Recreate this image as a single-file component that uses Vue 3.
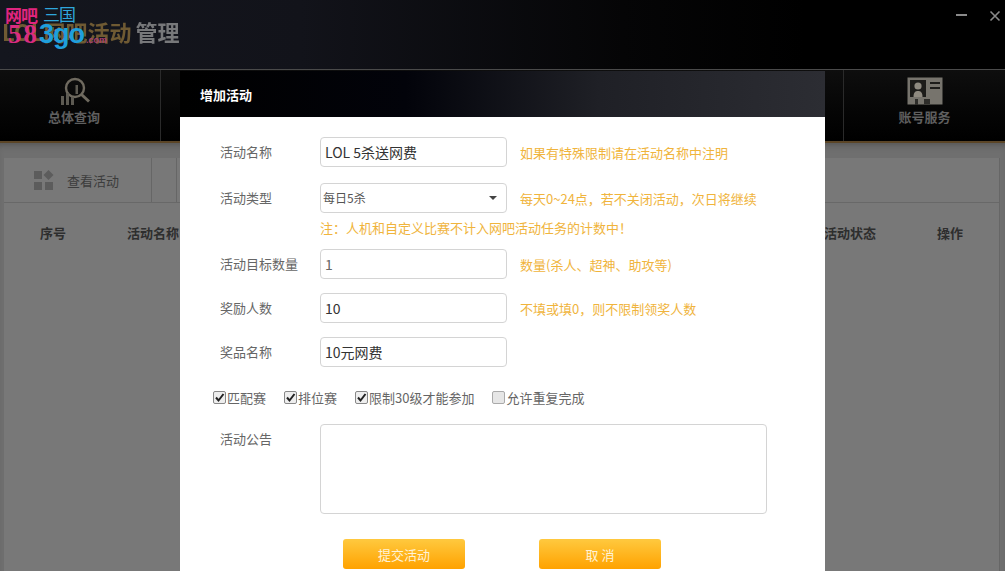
<script setup>
const tips = {
  name: '如果有特殊限制请在活动名称中注明',
  type: '每天0~24点，若不关闭活动，次日将继续',
  note: '注：人机和自定义比赛不计入网吧活动任务的计数中！',
  count: '数量(杀人、超神、助攻等)',
  people: '不填或填0，则不限制领奖人数'
}
const checks = [
  { label: '匹配赛', checked: true },
  { label: '排位赛', checked: true },
  { label: '限制30级才能参加', checked: true },
  { label: '允许重复完成', checked: false }
]
const columns = ['序号', '活动名称', '活动状态', '操作']
</script>

<template>
  <div class="window">
    <header class="topbar">
      <div class="logo"><span class="logo-gold">LOL网吧活动</span><span class="logo-gray">管理</span></div>
      <div class="winctl">
        <span class="minimize"></span>
        <svg class="close" width="12" height="12" viewBox="0 0 12 12"><path d="M1.5 1.5l9 9M10.5 1.5l-9 9" stroke="#8a8a8a" stroke-width="1.6" /></svg>
      </div>
    </header>

    <nav class="nav">
      <div class="nav-item first">
        <svg width="32" height="30" viewBox="0 0 32 30" fill="none">
          <circle cx="17" cy="12" r="9" stroke="#6f6a5f" stroke-width="2.4" />
          <path d="M23.5 18.5l7.5 7" stroke="#6f6a5f" stroke-width="3" />
          <path d="M3 20h3v9H3zM8 17h3v12H8zM13 21h3v8h-3zM17.5 9h2.5v9h-2.5z" fill="#5d5a52" />
        </svg>
        <span>总体查询</span>
      </div>
      <div class="nav-spacer"></div>
      <div class="nav-item last">
        <svg width="36" height="29" viewBox="0 0 36 29">
          <rect x="0.5" y="0.5" width="35" height="27" fill="#77746d" />
          <rect x="3" y="3" width="16" height="17" fill="#1d1c1a" />
          <circle cx="11" cy="9" r="3.6" fill="#8f8a80" />
          <path d="M6.5 20c0-5 2-6 4.500-6s4.500 1 4.500 6z" fill="#8f8a80" />
          <path d="M23 5h10v2H23zM23 10h10v2H23z" fill="#1d1c1a" />
          <path d="M8 22h3v6H8zM17 22h6v5h-6z" fill="#2e2d2a" />
        </svg>
        <span>账号服务</span>
      </div>
    </nav>

    <main class="content">
      <div class="panel">
        <div class="tabs">
          <div class="tab active">
            <svg width="20" height="20" viewBox="0 0 20 20" fill="#5c5c5c">
              <rect x="0" y="1" width="8" height="8" />
              <path d="M14.500 0l5 5-5 5-5-5z" />
              <rect x="0" y="12" width="8" height="8" />
              <rect x="11" y="12" width="8" height="8" />
            </svg>
            <span>查看活动</span>
          </div>
          <div class="tab blank"></div>
        </div>
        <div class="thead">
          <span v-for="c in columns" :key="c">{{ c }}</span>
        </div>
      </div>
    </main>

    <div class="watermark">
      <span class="wm-wang">网吧</span>
      <span class="wm-san">三国</span>
      <span class="wm-num"><b class="pink">58</b><b class="blue">3go</b><i>.com</i></span>
    </div>

    <section class="modal">
      <h2 class="modal-title">增加活动</h2>
      <form class="modal-body" @submit.prevent>
        <div class="row r-name">
          <label>活动名称</label>
          <div class="field strong">LOL 5杀送网费</div>
          <span class="tip">{{ tips.name }}</span>
        </div>
        <div class="row r-type">
          <label>活动类型</label>
          <div class="field select"><span>每日5杀</span><i class="caret"></i></div>
          <span class="tip">{{ tips.type }}</span>
        </div>
        <div class="note">{{ tips.note }}</div>
        <div class="row r-count">
          <label>活动目标数量</label>
          <div class="field">1</div>
          <span class="tip">{{ tips.count }}</span>
        </div>
        <div class="row r-next">
          <label>奖励人数</label>
          <div class="field strong">10</div>
          <span class="tip">{{ tips.people }}</span>
        </div>
        <div class="row r-next">
          <label>奖品名称</label>
          <div class="field strong">10元网费</div>
        </div>
        <div class="checks">
          <span v-for="c in checks" :key="c.label" class="check">
            <span class="box" :class="{ on: c.checked }">
              <svg v-if="c.checked" width="11" height="11" viewBox="0 0 11 11"><path d="M2 5.500l2.500 3L9.500 2" fill="none" stroke="#222" stroke-width="2" /></svg>
            </span>{{ c.label }}
          </span>
        </div>
        <div class="row r-notice">
          <label>活动公告</label>
          <div class="area"></div>
        </div>
        <div class="actions">
          <button class="btn" type="button">提交活动</button>
          <button class="btn" type="button">取 消</button>
        </div>
      </form>
    </section>
  </div>
</template>

<style>
html, body { margin: 0; background: #777; overflow: hidden; }
</style>

<style scoped>
.window {
  position: relative;
  width: 1005px;
  height: 571px;
  overflow: hidden;
  display: flex;
  flex-direction: column;
  font-family: "Noto Sans CJK SC", "Liberation Sans", sans-serif;
  background: #757575;
}
.topbar {
  height: 69px;
  flex: none;
  display: flex;
  justify-content: space-between;
  background: linear-gradient(90deg, #14161e 0%, #12131a 30%, #050506 62%, #000 80%);
  border-bottom: 1px solid #4a4a4a;
}
.logo {
  padding: 17px 0 0 2px;
  font-size: 22px;
  line-height: 28px;
  font-weight: 700;
  white-space: nowrap;
  filter: blur(0.5px);
}
.logo-gold { color: #6f5a33; }
.logo-gray { color: #77787a; margin-left: 4px; }
.winctl { display: flex; gap: 22px; padding: 10px 4px 0 0; align-items: flex-start; }
.minimize { width: 11px; height: 2px; background: #8a8a8a; margin-top: 4px; }
.close { margin-top: 0; }
.nav {
  height: 71px;
  flex: none;
  display: flex;
  background: linear-gradient(180deg, #0e0e0e, #050505 60%, #000);
  border-bottom: 2px solid #5b4526;
  box-sizing: content-box;
}
.nav-item {
  display: flex;
  flex-direction: column;
  align-items: center;
  gap: 1px;
  color: #5f5f5f;
  font-size: 13px;
  font-weight: 700;
  line-height: 20px;
  padding-top: 6px;
  box-sizing: border-box;
}
.nav-item.first { width: 161px; border-right: 1px solid #2a2a2a; padding-right: 12px; }
.nav-item.last { width: 162px; border-left: 1px solid #2a2a2a; padding-top: 7px; }
.nav-spacer { flex: 1; }
.content {
  flex: 1;
  padding: 15px 5px 0 4px;
  background: #6f6f6f;
  box-shadow: inset 0 6px 6px -4px #555;
}
.panel {
  height: 100%;
  background: #787878;
  border-right: 1px solid #666;
}
.tabs {
  display: flex;
  height: 44px;
  box-sizing: content-box;
  border-bottom: 1px solid #686868;
}
.tab.active {
  width: 148px;
  display: flex;
  align-items: center;
  gap: 13px;
  padding-left: 30px;
  box-sizing: border-box;
  color: #3c3c3c;
  font-size: 13px;
  border-right: 1px solid #666;
}
.tab.blank { width: 24px; border-right: 1px solid #666; }
.thead {
  position: relative;
  display: flex;
  height: 58px;
  align-items: center;
  padding: 0 36px 0 36px;
  gap: 61px;
  color: #2e2e2e;
  font-size: 13px;
  font-weight: 700;
}
.thead span:nth-child(3) { margin-left: auto; }
.watermark {
  position: absolute;
  left: 4px;
  top: 4px;
  width: 110px;
  height: 44px;
  font-family: "Liberation Serif", serif;
}
.wm-wang {
  position: absolute;
  left: 1px;
  top: 2px;
  color: #e0257f;
  font: 700 17px/18px "Noto Sans CJK SC", sans-serif;
  letter-spacing: -1px;
  white-space: nowrap;
}
.wm-san {
  position: absolute;
  left: 39px;
  top: 0;
  color: #2fa6dc;
  font: 400 17px/20px "Noto Sans CJK SC", sans-serif;
  letter-spacing: -1px;
  white-space: nowrap;
}
.wm-num {
  position: absolute;
  left: 4px;
  top: 16px;
  font-size: 27px;
  line-height: 28px;
  white-space: nowrap;
}
.wm-num b { font-weight: 700; }
.pink { color: #d92c7f; letter-spacing: 2px; }
.blue { color: #1f9fdc; font-family: "Liberation Sans", sans-serif; letter-spacing: -1px; }
.wm-num i {
  font: 700 9px "Liberation Sans", sans-serif;
  color: #a9406f;
  margin-left: 2px;
}
.modal {
  position: absolute;
  left: 180px;
  top: 71px;
  width: 645px;
  height: 500px;
  display: flex;
  flex-direction: column;
}
.modal-title {
  margin: 0;
  height: 46px;
  flex: none;
  padding-left: 20px;
  background: linear-gradient(90deg, #000 0%, #02030a 35%, #1f2026 65%, #2c2d33 100%);
  color: #fff;
  font-size: 13px;
  font-weight: 700;
  line-height: 48px;
}
.modal-body {
  flex: 1;
  background: #fff;
  padding: 20px 0 0 40px;
  color: #666;
  font-size: 13px;
  display: flex;
  flex-direction: column;
}
.row { display: flex; align-items: center; height: 30px; }
.row label { width: 100px; flex: none; white-space: nowrap; line-height: 30px; }
.r-type { margin-top: 16px; }
.r-count { margin-top: 7px; }
.r-next { margin-top: 14px; }
.r-notice { margin-top: 16px; height: 90px; align-items: flex-start; }
.field {
  width: 187px;
  height: 30px;
  flex: none;
  box-sizing: border-box;
  border: 1px solid #d4d4d4;
  border-radius: 4px;
  padding: 0 4px;
  line-height: 28px;
  font-size: 14px;
  color: #666;
  background: #fff;
}
.field.strong { color: #333; }
.field.select {
  display: flex;
  justify-content: space-between;
  align-items: center;
  font-size: 12px;
  color: #555;
  padding: 0 9px 0 2px;
}
.caret {
  width: 0;
  height: 0;
  border-left: 4px solid transparent;
  border-right: 4px solid transparent;
  border-top: 4px solid #444;
}
.tip { margin-left: 13px; color: #f0b43c; white-space: nowrap; }
.note {
  margin-left: 100px;
  height: 29px;
  line-height: 29px;
  color: #f0b43c;
  white-space: nowrap;
}
.checks {
  display: flex;
  gap: 18px;
  margin: 19px 0 0 -7px;
  height: 22px;
  align-items: center;
  color: #666;
}
.check { display: flex; align-items: center; white-space: nowrap; }
.box {
  width: 11px;
  height: 11px;
  margin-right: 1px;
  border: 1px solid #aaa;
  border-radius: 2px;
  background: #e6e6e6;
  display: inline-flex;
}
.box.on { border-color: #888; background: #eee; }
.area {
  width: 447px;
  height: 90px;
  box-sizing: border-box;
  border: 1px solid #d4d4d4;
  border-radius: 4px;
}
.actions {
  display: flex;
  gap: 74px;
  margin: 25px 0 0 123px;
}
.btn {
  width: 122px;
  height: 30px;
  border: 0;
  border-radius: 3px;
  background: linear-gradient(180deg, #ffc93f, #ffa200);
  color: #fff3d8;
  font: 13px "Noto Sans CJK SC", sans-serif;
  padding: 0;
}
</style>
